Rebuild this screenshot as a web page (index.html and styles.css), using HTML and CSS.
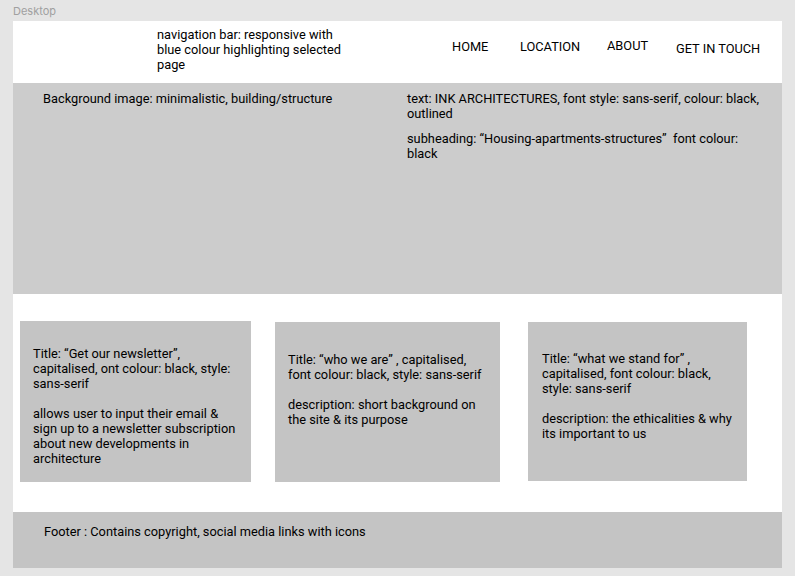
FILE: index.html
```html
<!DOCTYPE html>
<html lang="en">
<head>
<meta charset="utf-8">
<title>Desktop</title>
<link rel="stylesheet" href="styles.css">
</head>
<body>
<div class="canvas-label">Desktop</div>
<div class="frame">
  <header class="nav">
    <p class="nav-note">navigation bar: responsive with blue colour highlighting selected page</p>
    <ul class="nav-links">
      <li class="nav-item nav-home">HOME</li>
      <li class="nav-item nav-location">LOCATION</li>
      <li class="nav-item nav-about">ABOUT</li>
      <li class="nav-item nav-contact">GET IN TOUCH</li>
    </ul>
  </header>
  <section class="hero">
    <p class="hero-left">Background image: minimalistic, building/structure</p>
    <div class="hero-right">
      <p>text: INK ARCHITECTURES, font style: sans-serif, colour: black, outlined</p>
      <p>subheading: “Housing-apartments-structures”&nbsp; font colour: black</p>
    </div>
  </section>
  <section class="cards">
    <div class="card card-news">
      <p>Title: “Get our newsletter”, capitalised, ont colour: black, style: sans-serif</p>
      <p>allows user to input their email &amp; sign up to a newsletter subscription about new developments in architecture</p>
    </div>
    <div class="card card-who">
      <p>Title: “who we are” , capitalised, font colour: black, style: sans-serif</p>
      <p>description: short background on the site &amp; its purpose</p>
    </div>
    <div class="card card-stand">
      <p>Title: “what we stand for” , capitalised, font colour: black, style: sans-serif</p>
      <p>description: the ethicalities &amp; why its important to us</p>
    </div>
  </section>
  <footer class="footer">
    <p>Footer : Contains copyright, social media links with icons</p>
  </footer>
</div>
</body>
</html>
```

FILE: styles.css
```css
* { box-sizing: border-box; }

html, body {
  margin: 0;
  padding: 0;
  background: #e5e5e5;
}

body {
  font-family: Roboto, "Liberation Sans", sans-serif;
  font-size: 12.8px;
  line-height: 15px;
  color: #000;
  width: 795px;
  height: 576px;
  overflow: hidden;
}

p { margin: 0; }

.canvas-label {
  height: 21px;
  padding: 5px 0 0 13px;
  font-family: Inter, "Liberation Sans", sans-serif;
  font-size: 11px;
  line-height: 13px;
  color: #a0a0a0;
}

.frame {
  margin-left: 13px;
  width: 769px;
  height: 547px;
  background: #fff;
  display: flex;
  flex-direction: column;
}

/* nav */
.nav {
  height: 62px;
  display: flex;
  align-items: flex-start;
  flex: none;
}

.nav-note {
  margin-left: 144px;
  margin-top: 6px;
  width: 200px;
}

.nav-links {
  list-style: none;
  margin: 0 0 0 95px;
  padding: 0;
  display: flex;
  align-items: flex-start;
}

.nav-item { white-space: nowrap; }
.nav-home { width: 68px; margin-top: 18px; }
.nav-location { width: 87px; margin-top: 18px; }
.nav-about { width: 69px; margin-top: 17px; }
.nav-contact { margin-top: 20px; }

/* hero */
.hero {
  height: 211px;
  flex: none;
  background: #cccccc;
  display: flex;
  align-items: flex-start;
  padding-top: 8px;
}

.hero-left {
  margin-left: 30px;
  width: 364px;
}

.hero-right {
  width: 364px;
  display: flex;
  flex-direction: column;
  gap: 10px;
}

/* cards */
.cards {
  height: 218px;
  flex: none;
  display: flex;
  align-items: flex-start;
  padding: 27px 0 0 7px;
}

.card {
  background: #c4c4c4;
  display: flex;
  flex-direction: column;
  gap: 15px;
}

.card-news {
  width: 231px;
  height: 161px;
  padding: 25px 12px 0 13px;
}

.card-who {
  width: 225px;
  height: 160px;
  margin: 1px 0 0 24px;
  padding: 30px 14px 0 13px;
}

.card-stand {
  width: 219px;
  height: 159px;
  margin: 1px 0 0 28px;
  padding: 29px 9px 0 14px;
}

/* footer */
.footer {
  height: 56px;
  flex: none;
  background: #c4c4c4;
  padding: 12px 0 0 31px;
}
```
